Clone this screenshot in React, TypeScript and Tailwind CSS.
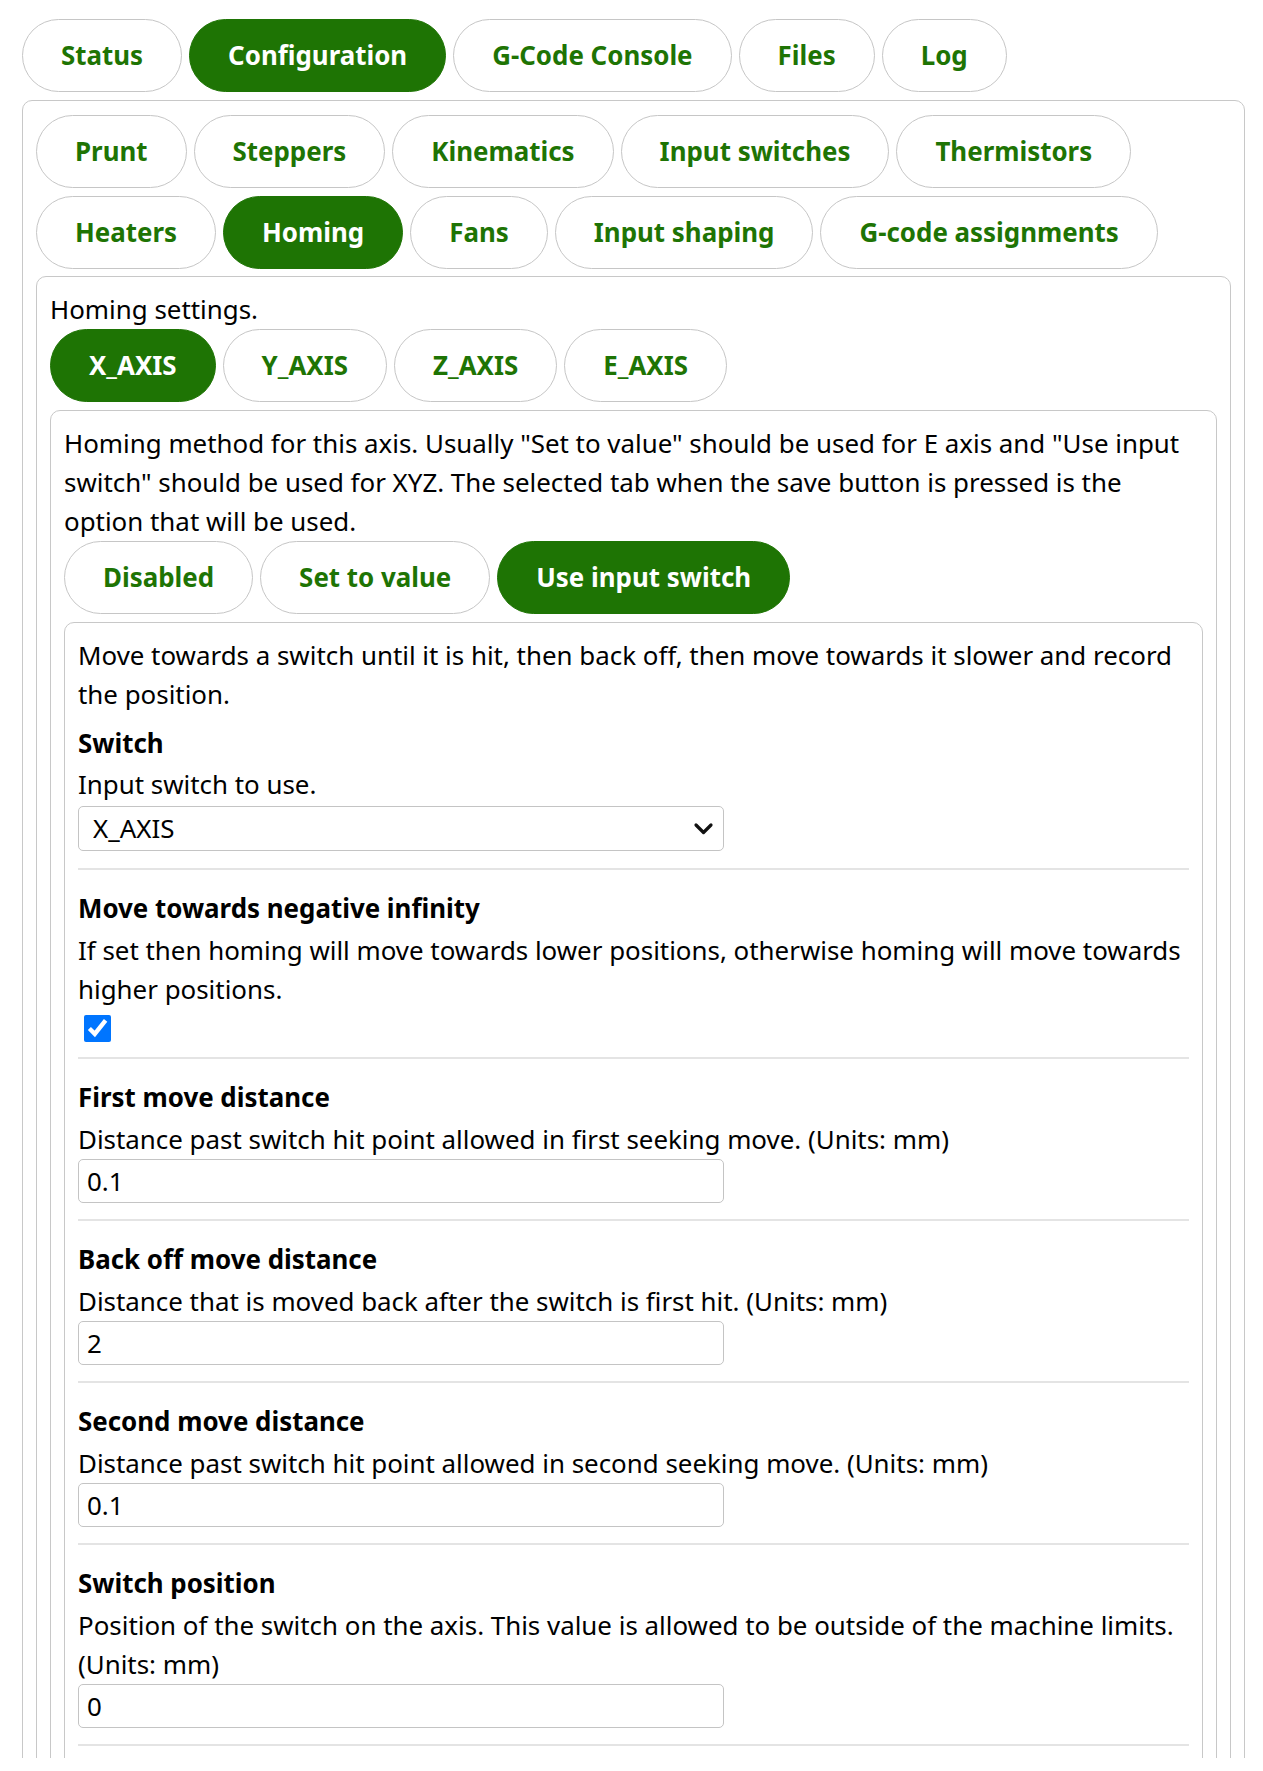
import React, { useState } from 'react';

const TabButton = ({ label, active, onClick }: { label: string; active?: boolean; onClick?: () => void }) => (
    <button
        type="button"
        onClick={onClick}
        className={`rounded-full border-[1.5px] px-[38px] py-[16px] font-bold leading-[39px] ${
            active ? 'border-[#1e7404] bg-[#1e7404] text-white' : 'border-[#c6c6c6] bg-white text-[#1e7404]'
        }`}
    >
        {label}
    </button>
);

const Panel = ({ children, className = '' }: { children: React.ReactNode; className?: string }) => (
    <div className={`rounded-[10px] border-[1.5px] border-[#c8c8c8] p-[13px] ${className}`}>{children}</div>
);

const NumberField = ({ title, desc, value }: { title: string; desc: string; value: string }) => (
    <div className="pt-[19px] pb-[16px]">
        <h3 className="font-bold">{title}</h3>
        <p className="mt-[3px]">{desc}</p>
        <input
            type="text"
            defaultValue={value}
            className="block h-[44px] w-[646px] rounded-[5px] border-[1.5px] border-[#c4c4c4] px-[8px] text-[25.9px] outline-none"
        />
    </div>
);

export default function App() {
    const [mainTab, setMainTab] = useState('Configuration');
    const [subTab, setSubTab] = useState('Homing');
    const [axis, setAxis] = useState('X_AXIS');
    const [method, setMethod] = useState('Use input switch');
    const [negative, setNegative] = useState(true);

    const mainTabs = ['Status', 'Configuration', 'G-Code Console', 'Files', 'Log'];
    const subTabs = [
        'Prunt', 'Steppers', 'Kinematics', 'Input switches', 'Thermistors',
        'Heaters', 'Homing', 'Fans', 'Input shaping', 'G-code assignments',
    ];
    const axes = ['X_AXIS', 'Y_AXIS', 'Z_AXIS', 'E_AXIS'];
    const methods = ['Disabled', 'Set to value', 'Use input switch'];

    return (
        <div className="h-[1758px] overflow-hidden bg-white pl-[22px] pr-[18px] pt-[19px] font-['Noto_Sans',sans-serif] text-[25.9px] leading-[39px] text-black">
            <div className="flex flex-wrap gap-x-[7px] gap-y-[8px]">
                {mainTabs.map((t) => (
                    <TabButton key={t} label={t} active={t === mainTab} onClick={() => setMainTab(t)} />
                ))}
            </div>

            <Panel className="mt-[8px] pt-[14px]">
                <div className="flex flex-wrap gap-x-[7px] gap-y-[8px]">
                    {subTabs.slice(0, 5).map((t) => (
                        <TabButton key={t} label={t} active={t === subTab} onClick={() => setSubTab(t)} />
                    ))}
                </div>
                <div className="mt-[8px] flex flex-wrap gap-x-[7px]">
                    {subTabs.slice(5).map((t) => (
                        <TabButton key={t} label={t} active={t === subTab} onClick={() => setSubTab(t)} />
                    ))}
                </div>

                <Panel className="mt-[7px]">
                    <p>Homing settings.</p>
                    <div className="flex flex-wrap gap-x-[7px]">
                        {axes.map((a) => (
                            <TabButton key={a} label={a} active={a === axis} onClick={() => setAxis(a)} />
                        ))}
                    </div>

                    <Panel className="mt-[8px]">
                        <p>
                            Homing method for this axis. Usually "Set to value" should be used for E axis and "Use input
                            switch" should be used for XYZ. The selected tab when the save button is pressed is the
                            option that will be used.
                        </p>
                        <div className="flex flex-wrap gap-x-[7px]">
                            {methods.map((m) => (
                                <TabButton key={m} label={m} active={m === method} onClick={() => setMethod(m)} />
                            ))}
                        </div>

                        <Panel className="mt-[8px]">
                            <div className="divide-y-2 divide-[#e4e4e4]">
                                <div className="pb-[17px]">
                                    <p>
                                        Move towards a switch until it is hit, then back off, then move towards it slower and
                                        record the position.
                                    </p>
                                    <h3 className="mt-[10px] font-bold">Switch</h3>
                                    <p className="mt-[2px]">Input switch to use.</p>
                                    <div className="relative mt-[2px] w-[646px]">
                                        <select
                                            defaultValue="X_AXIS"
                                            className="block h-[45px] w-full appearance-none rounded-[5px] border-[1.5px] border-[#c4c4c4] bg-white pl-[14px] text-[25.9px] outline-none"
                                        >
                                            {axes.map((a) => (
                                                <option key={a}>{a}</option>
                                            ))}
                                        </select>
                                        <svg
                                            className="pointer-events-none absolute right-[10px] top-[16px]"
                                            width="21"
                                            height="13"
                                            viewBox="0 0 21 13"
                                            fill="none"
                                            stroke="#111"
                                            strokeWidth="3.2"
                                            strokeLinecap="round"
                                            strokeLinejoin="round"
                                        >
                                            <path d="M3 3l7.5 7.5L18 3" />
                                        </svg>
                                    </div>
                                </div>

                                <div className="pt-[19px] pb-[15px]">
                                    <h3 className="font-bold">Move towards negative infinity</h3>
                                    <p className="mt-[3px]">
                                        If set then homing will move towards lower positions, otherwise homing will move towards
                                        higher positions.
                                    </p>
                                    <input
                                        type="checkbox"
                                        checked={negative}
                                        onChange={(e) => setNegative(e.target.checked)}
                                        className="mt-[6px] ml-[6px] block h-[27px] w-[27px] accent-[#0075ff]"
                                    />
                                </div>

                                <NumberField
                                    title="First move distance"
                                    desc="Distance past switch hit point allowed in first seeking move. (Units: mm)"
                                    value="0.1"
                                />
                                <NumberField
                                    title="Back off move distance"
                                    desc="Distance that is moved back after the switch is first hit. (Units: mm)"
                                    value="2"
                                />
                                <NumberField
                                    title="Second move distance"
                                    desc="Distance past switch hit point allowed in second seeking move. (Units: mm)"
                                    value="0.1"
                                />
                                <NumberField
                                    title="Switch position"
                                    desc="Position of the switch on the axis. This value is allowed to be outside of the machine limits. (Units: mm)"
                                    value="0"
                                />
                                <div className="h-[40px]" />
                            </div>
                        </Panel>
                    </Panel>
                </Panel>
            </Panel>
        </div>
    );
}
